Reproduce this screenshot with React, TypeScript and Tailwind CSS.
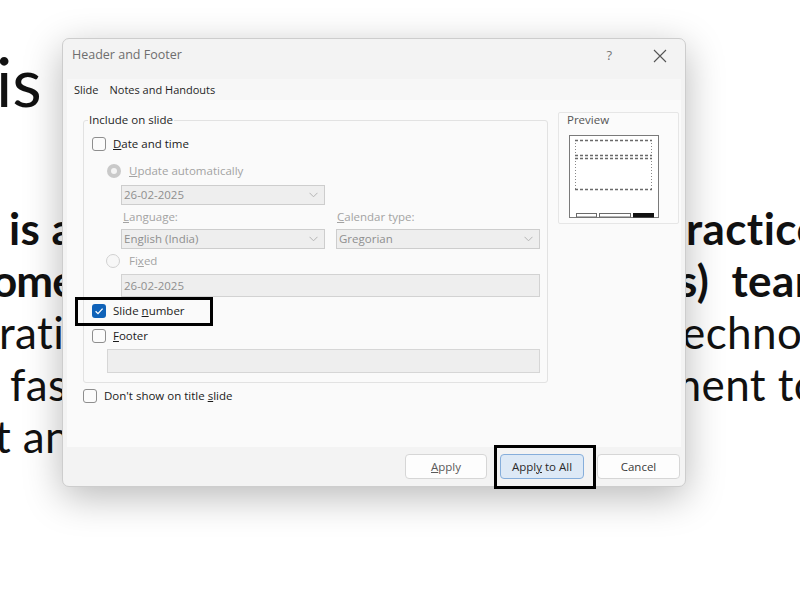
import React from "react";

function Checkbox({ checked }: { checked?: boolean }) {
  return checked ? (
    <span className="w-[14px] h-[14px] rounded-[3px] bg-[#0f62b8] flex items-center justify-center shrink-0">
      <svg width="10" height="10" viewBox="0 0 10 10">
        <path d="M1.6 5.3 L4 7.6 L8.6 2.6" fill="none" stroke="#ffffff" strokeWidth="1.3" />
      </svg>
    </span>
  ) : (
    <span className="w-[14px] h-[14px] rounded-[3px] border border-[#8e8e8e] bg-[#fbfbfb] shrink-0" />
  );
}

function Chevron() {
  return (
    <svg width="9" height="6" viewBox="0 0 9 6" className="shrink-0">
      <path d="M0.5 0.8 L4.5 4.8 L8.5 0.8" fill="none" stroke="#b4b4b4" strokeWidth="1" />
    </svg>
  );
}

function Dropdown({ text, w }: { text: string; w: string }) {
  return (
    <div className={`${w} h-[20px] border border-[#cdcdcd] bg-[#eeeeee] flex items-center pl-[2px] pr-[6px] text-[11.5px] text-[#8f8f8f]`}>
      <span className="flex-1">{text}</span>
      <Chevron />
    </div>
  );
}

function Preview() {
  return (
    <svg width="90" height="83" viewBox="0 0 90 83">
      <rect x="0.5" y="0.5" width="89" height="82" fill="#ffffff" stroke="#7a7a7a" strokeWidth="1" />
      <g fill="none" stroke="#6a6a6a">
        <path d="M6 5.5 H83 M6 20.5 H83 M6 23.5 H83 M6 54.5 H83" strokeWidth="1.6" strokeDasharray="3 2" />
        <path d="M6.5 5 V21 M82.5 5 V21 M6.5 23 V55 M82.5 23 V55" strokeWidth="0.8" strokeDasharray="1 2" />
        <rect x="7.5" y="78.5" width="20" height="3.5" strokeWidth="1" />
        <rect x="30.5" y="78.5" width="31" height="3.5" strokeWidth="1" />
      </g>
      <rect x="64" y="78" width="21" height="4.5" fill="#111111" />
    </svg>
  );
}

function Dialog() {
  return (
    <div className="absolute left-[62px] top-[38px] w-[624px] h-[449px] rounded-[7px] border border-[#cdcdcd] bg-[#f3f3f3] shadow-[0_10px_38px_rgba(0,0,0,0.28)] flex flex-col overflow-hidden font-['Segoe_UI','Open_Sans',sans-serif]">
      {/* Title bar */}
      <div className="h-[33px] shrink-0 flex items-center pl-[9px] pr-[18px] text-[12.5px] text-[#6e6e6e]">
        <span>Header and Footer</span>
        <span className="ml-auto mr-[41px] text-[13px] text-[#777]">?</span>
        <svg width="14" height="14" viewBox="0 0 14 14">
          <path d="M1 1 L13 13 M13 1 L1 13" stroke="#555" strokeWidth="1.1" />
        </svg>
      </div>

      {/* Middle */}
      <div className="flex-1 flex flex-col px-[4px] pt-[7px]">
        <div className="h-[21px] shrink-0 flex items-center bg-[#f7f7f7] text-[11px] text-[#1f1f1f] pt-[1px]">
          <span className="pl-[7px] pr-[11px]">Slide</span>
          <span>Notes and Handouts</span>
        </div>
        <div className="flex-1 bg-[#fafafa] flex items-start pl-[16px] pt-[12px]">
          <div className="flex flex-col">
            <fieldset className="w-[465px] border border-[#e2e2e2] rounded-[3px] pl-[8px] pr-[7px] pb-[9px] text-[11.5px] text-[#1b1b1b]">
              <legend className="ml-[-4px] px-[1px] leading-[16px] text-[#1f1f1f]">Include on slide</legend>

              <div className="mt-[8px] h-[16px] flex items-center gap-[7px]">
                <Checkbox />
                <span><span className="underline">D</span>ate and time</span>
              </div>

              <div className="mt-[11px] h-[16px] flex items-center pl-[15px] gap-[8px] text-[#a3a3a3]">
                <span className="w-[14px] h-[14px] rounded-full bg-[#c9c9c9] flex items-center justify-center">
                  <span className="w-[6px] h-[6px] rounded-full bg-[#f4f4f4]" />
                </span>
                <span><span className="underline">U</span>pdate automatically</span>
              </div>

              <div className="mt-[6px] pl-[29px]">
                <Dropdown text="26-02-2025" w="w-[204px]" />
              </div>

              <div className="mt-[5px] h-[14px] flex items-center pl-[31px] text-[#a3a3a3]">
                <span className="w-[214px]"><span className="underline">L</span>anguage:</span>
                <span><span className="underline">C</span>alendar type:</span>
              </div>

              <div className="mt-[5px] pl-[29px] flex gap-[11px]">
                <Dropdown text="English (India)" w="w-[204px]" />
                <Dropdown text="Gregorian" w="w-[204px]" />
              </div>

              <div className="mt-[4px] h-[16px] flex items-center pl-[14px] gap-[9px] text-[#a3a3a3]">
                <span className="w-[14px] h-[14px] rounded-full border border-[#d0d0d0] bg-[#f7f7f7]" />
                <span>Fi<span className="underline">x</span>ed</span>
              </div>

              <div className="mt-[5px] ml-[29px] h-[23px] border border-[#d2d2d2] bg-[#eeeeee] flex items-center pl-[2px] text-[#8f8f8f]">
                26-02-2025
              </div>

              <div className="mt-[6px] h-[16px] flex items-center gap-[7px]">
                <Checkbox checked />
                <span>Slide <span className="underline">n</span>umber</span>
              </div>

              <div className="mt-[9px] h-[16px] flex items-center gap-[7px]">
                <Checkbox />
                <span><span className="underline">F</span>ooter</span>
              </div>

              <div className="mt-[5px] ml-[15px] h-[24px] border border-[#d6d6d6] bg-[#eeeeee]" />
            </fieldset>

            <div className="mt-[5px] h-[16px] flex items-center gap-[7px] text-[11.5px] text-[#1b1b1b]">
              <Checkbox />
              <span>Don't show on title <span className="underline">s</span>lide</span>
            </div>
          </div>

          <div className="ml-[10px] w-[121px] h-[112px] border border-[#e6e6e6] rounded-[2px] bg-[#fbfbfb] pl-[8px]">
            <div className="text-[11.5px] leading-[14px] text-[#555]">Preview</div>
            <div className="mt-[8px] ml-[2px] flex">
              <Preview />
            </div>
          </div>
        </div>
      </div>

      {/* Footer */}
      <div className="h-[39px] shrink-0 flex items-start justify-end gap-[13px] pt-[7px] pr-[5px] text-[11.5px]">
        <button className="w-[82px] h-[25px] rounded-[4px] border border-[#d6d6d6] bg-[#fdfdfd] text-[#5a5a5a]">
          <span className="underline">A</span>pply
        </button>
        <button className="w-[84px] h-[25px] rounded-[4px] border border-[#86aedb] bg-[#dde9f6] text-[#2a2a2a]">
          Appl<span className="underline">y</span> to All
        </button>
        <button className="w-[83px] h-[25px] rounded-[4px] border border-[#d6d6d6] bg-[#fdfdfd] text-[#3a3a3a]">
          Cancel
        </button>
      </div>
    </div>
  );
}

function Slide() {
  return (
    <div className="flex flex-col text-[#111111] font-['Lato',sans-serif] whitespace-nowrap">
      <div className="pt-[47px] h-[115px] text-[68px] leading-[68px] ml-[-4px]">is</div>
      <div className="pt-[87px] flex flex-col text-[44px] leading-[52px] tracking-[0.4px]">
        <div className="h-[52px] flex font-bold">
          <span className="w-[686px] shrink-0 pl-[9px]">is a</span>
          <span>ractice</span>
        </div>
        <div className="h-[52px] flex font-bold">
          <span className="w-[686px] shrink-0 ml-[-8px] tracking-[-1px]">ome</span>
          <span>s)&nbsp; team</span>
        </div>
        <div className="h-[52px] flex">
          <span className="w-[686px] shrink-0 ml-[-1px]">ration</span>
          <span className="ml-[-3px]">echnology</span>
        </div>
        <div className="h-[52px] flex">
          <span className="w-[686px] shrink-0 pl-[10px]">fast</span>
          <span className="ml-[-21px]">ment to</span>
        </div>
        <div className="h-[52px] flex">
          <span className="w-[686px] shrink-0 ml-[-5px]">t and</span>
        </div>
      </div>
    </div>
  );
}

export default function App() {
  return (
    <div className="relative w-[800px] h-[598px] overflow-hidden bg-white">
      <Slide />
      <Dialog />
      <div className="absolute left-[75px] top-[297px] w-[138px] h-[29px] border-[3px] border-black" />
      <div className="absolute left-[494px] top-[445px] w-[102px] h-[44px] border-[3px] border-black" />
    </div>
  );
}
